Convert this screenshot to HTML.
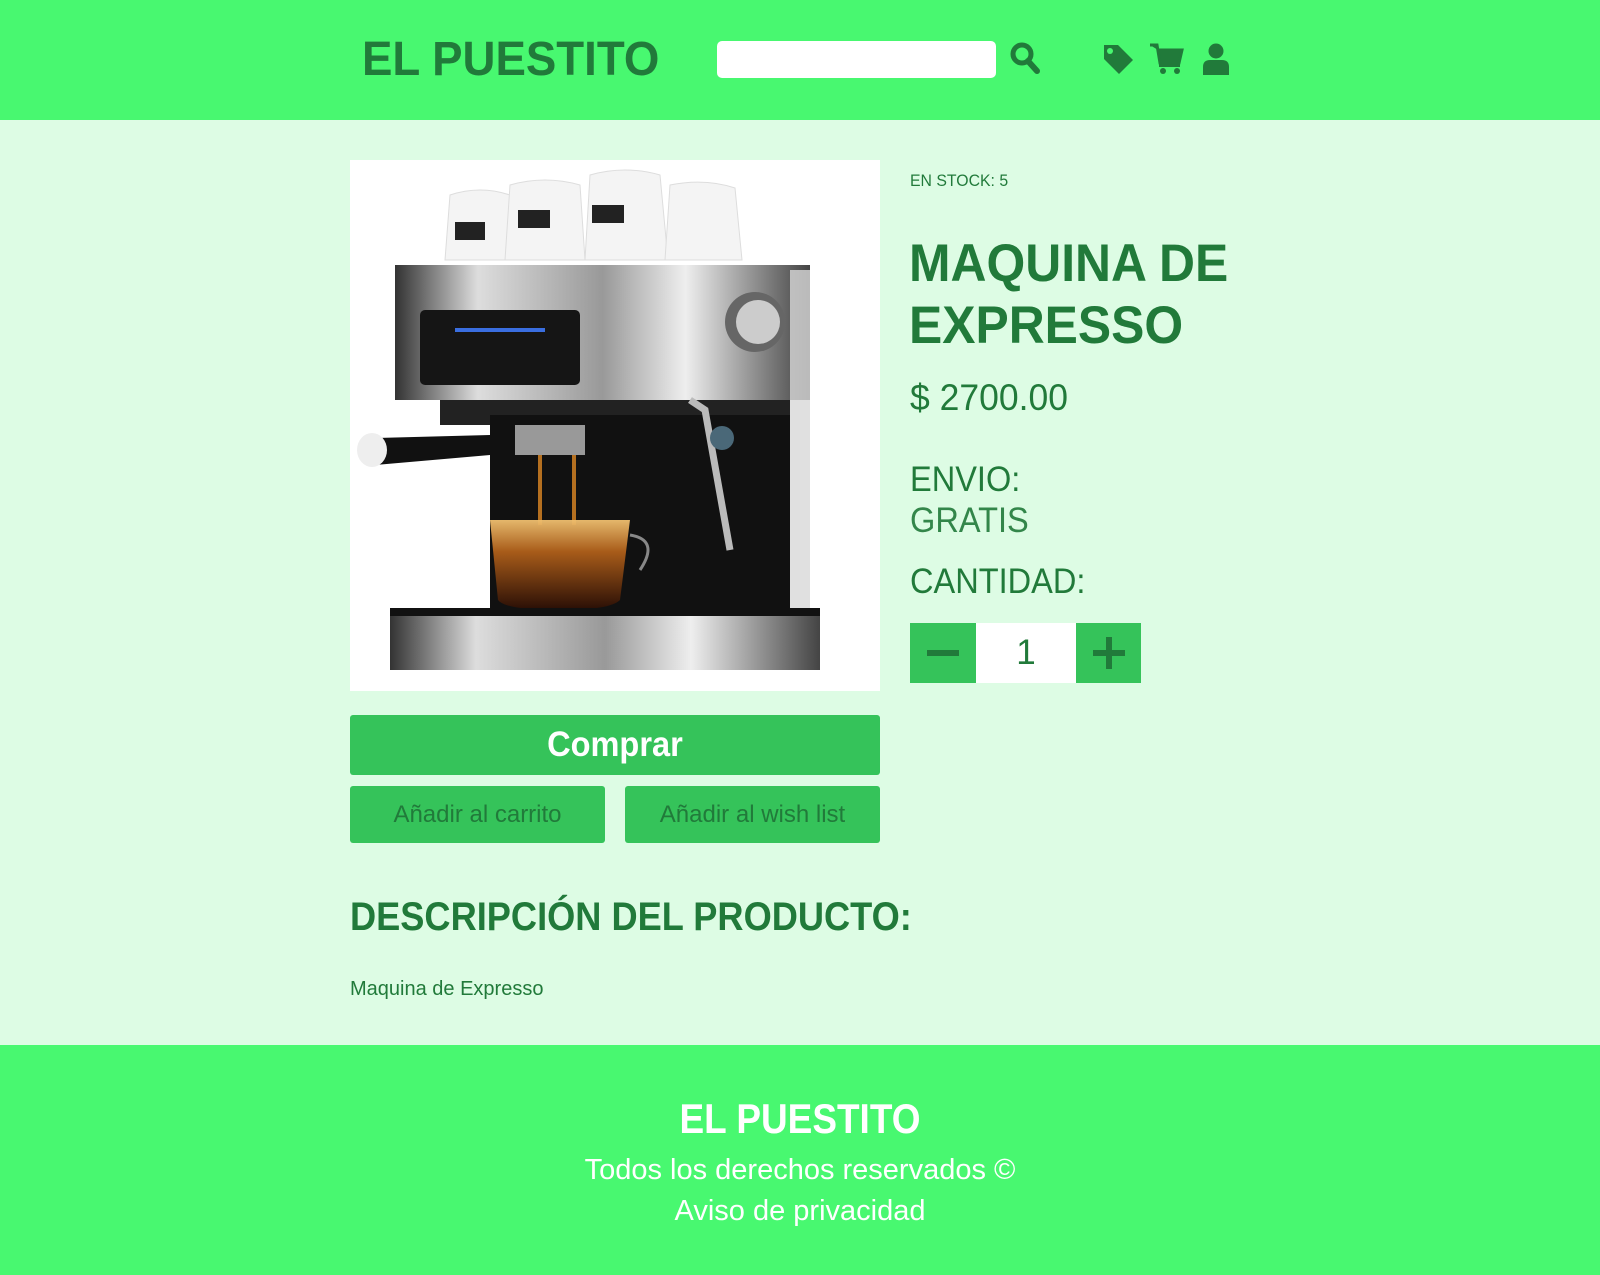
<!DOCTYPE html>
<html><head><meta charset="utf-8"><style>
*{margin:0;padding:0;box-sizing:border-box}
body{width:1600px;height:1275px;background:#ddfce4;font-family:"Liberation Sans",sans-serif;color:#217a3a;position:relative;overflow:hidden}
.a{position:absolute;white-space:nowrap}
header{position:absolute;left:0;top:0;width:1600px;height:120px;background:#48f870}
footer{position:absolute;left:0;top:1045px;width:1600px;height:230px;background:#48f870;color:#fff;text-align:center}
.btn{position:absolute;background:#35c35a;border-radius:3px;text-align:center}
.sx{display:inline-block;transform-origin:left}
</style></head><body>
<header>
<div class="a" style="left:362px;top:32px;font-size:48px;line-height:56px;font-weight:bold;transform:scaleX(0.95);transform-origin:left">EL PUESTITO</div>
<div class="a" style="left:717px;top:41px;width:279px;height:37px;background:#fff;border-radius:5px"></div>
<svg class="a" style="left:1008px;top:41px" width="34" height="34" viewBox="0 0 34 34"><circle cx="14" cy="13" r="9" fill="none" stroke="#217a3a" stroke-width="5"/><path d="M20 20 L29 30" stroke="#217a3a" stroke-width="6" stroke-linecap="round"/></svg>
<svg class="a" style="left:1102px;top:43px" width="32" height="32" viewBox="0 0 32 32"><path d="M2 2 H16 L31 17 L17 31 L2 16 Z" fill="#217a3a"/><circle cx="8" cy="8" r="3" fill="#48f870"/></svg>
<svg class="a" style="left:1150px;top:43px" width="34" height="32" viewBox="0 0 34 32"><path d="M0 2 H7 L10 20 H29 L32 7 H8" fill="#217a3a" stroke="#217a3a" stroke-width="3"/><rect x="9" y="20" width="21" height="4" fill="#217a3a"/><circle cx="13" cy="28" r="3" fill="#217a3a"/><circle cx="27" cy="28" r="3" fill="#217a3a"/></svg>
<svg class="a" style="left:1202px;top:43px" width="28" height="32" viewBox="0 0 28 32"><circle cx="14" cy="8" r="7.5" fill="#217a3a"/><path d="M1 32 V24 Q1 17 8 17 H20 Q27 17 27 24 V32 Z" fill="#217a3a"/></svg>
</header>

<div class="a" style="left:350px;top:160px;width:530px;height:531px;background:#fff;overflow:hidden">
<svg width="530" height="531" viewBox="0 0 530 531">
<defs><linearGradient id="s" x1="0" x2="1"><stop offset="0" stop-color="#333"/><stop offset=".2" stop-color="#ddd"/><stop offset=".5" stop-color="#999"/><stop offset=".7" stop-color="#eee"/><stop offset="1" stop-color="#444"/></linearGradient>
<linearGradient id="c" x1="0" y1="0" x2="0" y2="1"><stop offset="0" stop-color="#f0c070"/><stop offset=".35" stop-color="#b0601a"/><stop offset="1" stop-color="#2a0e05"/></linearGradient></defs>
<g fill="#f4f4f4" stroke="#ddd"><path d="M100 35 Q130 25 160 35 L168 100 H95 Z"/><path d="M160 25 Q195 15 230 25 L235 100 H155 Z"/><path d="M240 15 Q275 5 310 15 L318 100 H235 Z"/><path d="M320 25 Q355 18 385 28 L392 100 H315 Z"/></g>
<g fill="#222"><rect x="105" y="62" width="30" height="18"/><rect x="168" y="50" width="32" height="18"/><rect x="242" y="45" width="32" height="18"/></g>
<path d="M45 105 L460 105 L460 240 L45 240 Z" fill="url(#s)"/>
<rect x="70" y="150" width="160" height="75" rx="5" fill="#151515"/>
<rect x="105" y="168" width="90" height="4" fill="#3a6ee0"/>
<circle cx="405" cy="162" r="30" fill="#666"/><circle cx="408" cy="162" r="22" fill="#ccc"/>
<rect x="90" y="240" width="350" height="25" fill="#222"/>
<rect x="140" y="255" width="300" height="195" fill="#111"/>
<rect x="440" y="110" width="20" height="340" fill="#d8d8d8" opacity=".8"/>
<path d="M10 285 Q10 300 25 305 L140 295 L140 275 L25 278 Q10 280 10 285 Z" fill="#111"/>
<ellipse cx="22" cy="290" rx="15" ry="17" fill="#eee"/>
<rect x="165" y="265" width="70" height="30" fill="#999"/>
<rect x="188" y="295" width="4" height="70" fill="#b57020"/><rect x="222" y="295" width="4" height="70" fill="#b57020"/>
<path d="M140 360 H280 L270 440 Q260 450 210 450 Q155 450 148 440 Z" fill="url(#c)" opacity=".95"/>
<path d="M280 375 Q310 380 290 410" fill="none" stroke="#888" stroke-width="3"/>
<path d="M340 240 L355 250 L380 390" fill="none" stroke="#bbb" stroke-width="7"/>
<circle cx="372" cy="278" r="12" fill="#4a6878"/>
<path d="M40 448 H470 V510 H40 Z" fill="url(#s)"/>
<rect x="40" y="448" width="430" height="8" fill="#111"/>
</svg></div>

<div class="a" style="left:910px;top:171px;font-size:17px;transform:scaleX(0.93);transform-origin:left">EN STOCK: 5</div>
<div class="a" style="left:909px;top:233px;font-size:53px;font-weight:bold;line-height:62px;transform:scaleX(0.94);transform-origin:left">MAQUINA DE<br>EXPRESSO</div>
<div class="a" style="left:910px;top:377px;font-size:37px;transform:scaleX(0.96);transform-origin:left">$ 2700.00</div>
<div class="a" style="left:910px;top:460px;font-size:35px;transform:scaleX(0.93);transform-origin:left">ENVIO:</div>
<div class="a" style="left:910px;top:501px;font-size:35px;transform:scaleX(0.93);transform-origin:left;opacity:.9">GRATIS</div>
<div class="a" style="left:910px;top:562px;font-size:35px;transform:scaleX(0.93);transform-origin:left">CANTIDAD:</div>
<div class="a" style="left:910px;top:623px;width:66px;height:60px;background:#35c35a"><div style="position:absolute;left:17px;top:27px;width:32px;height:6px;background:#217a3a"></div></div>
<div class="a" style="left:976px;top:623px;width:100px;height:60px;background:#fff;text-align:center;font-size:35px;line-height:60px;color:#217a3a">1</div>
<div class="a" style="left:1076px;top:623px;width:65px;height:60px;background:#35c35a"><div style="position:absolute;left:17px;top:27px;width:32px;height:6px;background:#217a3a"></div><div style="position:absolute;left:30px;top:14px;width:6px;height:32px;background:#217a3a"></div></div>

<div class="btn" style="left:350px;top:715px;width:530px;height:60px;color:#fff;font-weight:bold;font-size:35px;line-height:60px"><span class="sx" style="transform:scaleX(0.93);transform-origin:center">Comprar</span></div>
<div class="btn" style="left:350px;top:786px;width:255px;height:57px;font-size:24px;line-height:57px">Añadir al carrito</div>
<div class="btn" style="left:625px;top:786px;width:255px;height:57px;font-size:24px;line-height:57px">Añadir al wish list</div>

<div class="a" style="left:350px;top:893px;font-size:40px;font-weight:bold;line-height:48px;transform:scaleX(0.905);transform-origin:left">DESCRIPCIÓN DEL PRODUCTO:</div>
<div class="a" style="left:350px;top:978px;font-size:20px">Maquina de Expresso</div>

<footer>
<div style="position:absolute;left:0;width:1600px;top:50px;font-size:42px;line-height:48px;font-weight:bold;transform:scaleX(0.88)">EL PUESTITO</div>
<div style="position:absolute;left:0;width:1600px;top:108px;font-size:29px;line-height:34px">Todos los derechos reservados ©</div>
<div style="position:absolute;left:0;width:1600px;top:149px;font-size:29px;line-height:34px">Aviso de privacidad</div>
</footer>
</body></html>
